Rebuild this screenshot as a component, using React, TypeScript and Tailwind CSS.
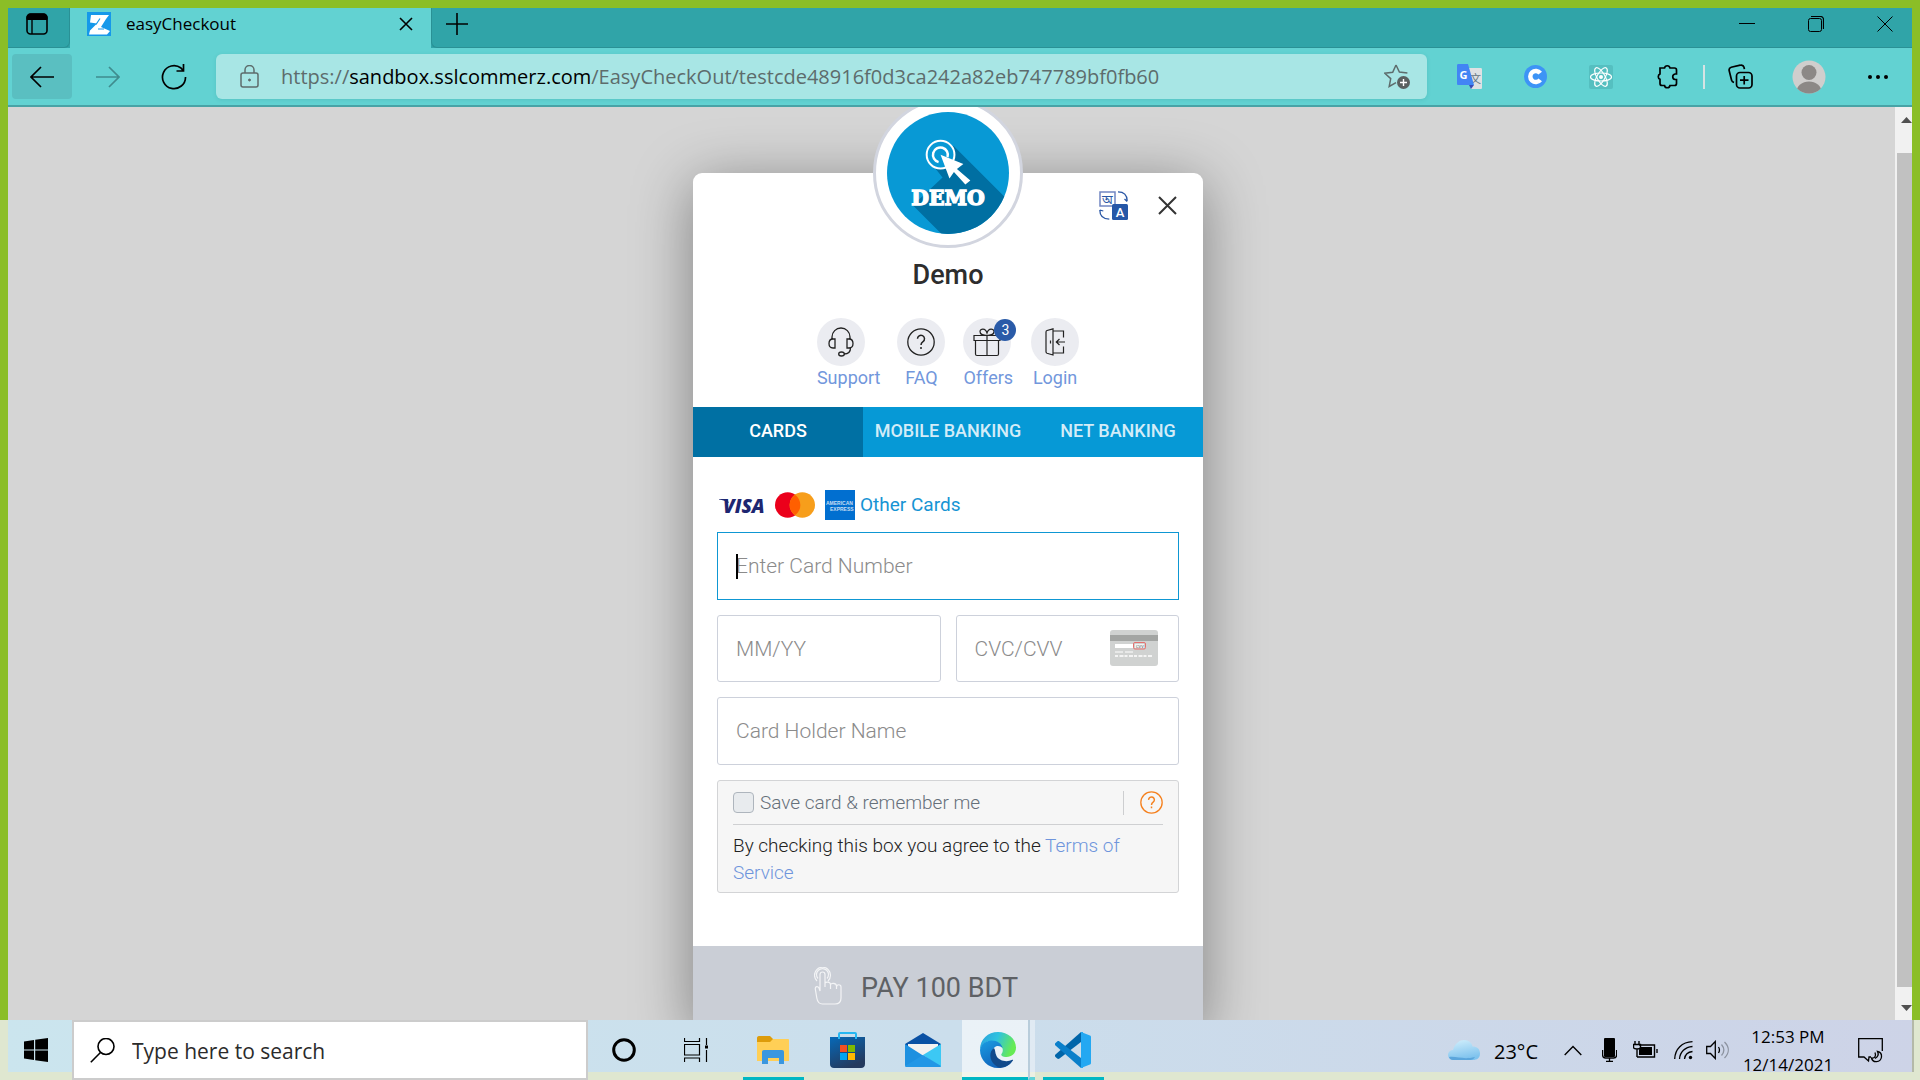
import type { ReactNode } from "react";

const ui = "font-['Open_Sans','Noto_Sans',sans-serif]";

function Svg({ w, h, box, children, className = "" }: { w: number; h: number; box?: string; children: ReactNode; className?: string }) {
  return (
    <svg width={w} height={h} viewBox={box ?? `0 0 ${w} ${h}`} fill="none" stroke="currentColor" className={`shrink-0 ${className}`} aria-hidden="true">
      {children}
    </svg>
  );
}

function TitleBar() {
  return (
    <div className="flex h-10 shrink-0 bg-[#30a4a8]">
      <button aria-label="Tab actions" className="flex w-[62px] items-start justify-center rounded-br-md border-r border-b border-[#2a9195] pt-[5px] pr-1">
        <Svg w={22} h={22}>
          <rect x="1" y="1" width="20" height="20" rx="3.5" strokeWidth="1.6" />
          <path d="M1 6.500V4.500C1 2.500 2.500 1 4.500 1h13C19.500 1 21 2.500 21 4.500v2z" fill="#000" />
          <path d="M6 6v15" strokeWidth="1.4" />
        </Svg>
      </button>
      <div className="flex w-[361px] items-start bg-[#62d2d2] pt-1 pl-[17px]">
        <Svg w={24} h={24}>
          <rect width="24" height="24" fill="#1598ea" stroke="none" />
          <path d="M4 3h18l-3 4-5 8 9 4-3 3.500H2l1-4 7-7-7-1z" fill="#fff" stroke="none" />
          <path d="M9 12.500l4-6M11 17h6" stroke="#1598ea" strokeWidth="1.200" />
        </Svg>
        <span className="ml-[15px] grow text-[17px] leading-6">easyCheckout</span>
        <button aria-label="Close tab" className="mt-[5px] mr-[18px]">
          <Svg w={14} h={14}><path d="M1 1l12 12M13 1L1 13" strokeWidth="1.600" /></Svg>
        </button>
      </div>
      <div className="flex grow items-start rounded-bl-md border-b border-l border-[#2a9195] pt-[5px] pl-[14px]">
        <button aria-label="New tab">
          <Svg w={22} h={22}><path d="M11 0v22M0 11h22" strokeWidth="1.600" /></Svg>
        </button>
      </div>
      <div className="flex items-start gap-[53px] border-b border-[#2a9195] pt-2 pr-[19px]">
        <button aria-label="Minimize"><Svg w={16} h={16}><path d="M0 7.500h16" /></Svg></button>
        <button aria-label="Restore">
          <Svg w={16} h={16}><rect x=".5" y="2.500" width="13" height="13" rx="2" /><path d="M3 .5h9.500a3 3 0 0 1 3 3V13" strokeWidth="1.200" /></Svg>
        </button>
        <button aria-label="Close"><Svg w={16} h={16}><path d="M.5.5l15 15M15.500.5l-15 15" /></Svg></button>
      </div>
    </div>
  );
}

function Toolbar() {
  return (
    <div className="flex h-[59px] shrink-0 items-center border-b-2 border-[#48a3a6] bg-[#62d2d2] pl-1">
      <button aria-label="Back" className="flex h-[45px] w-[60px] items-center justify-center rounded-sm bg-[#5abfc1]">
        <Svg w={24} h={22}><path d="M24 11H1M11 1L1 11l10 10" strokeWidth="1.700" /></Svg>
      </button>
      <button aria-label="Forward" className="ml-6 text-[#3f8c8e]">
        <Svg w={24} h={22}><path d="M0 11h23M13 1l10 10-10 10" strokeWidth="1.700" /></Svg>
      </button>
      <button aria-label="Refresh" className="ml-[41px]">
        <Svg w={26} h={26}><path d="M24.500 13A11.500 11.500 0 1 1 20 4l2 2.500M22.500 0v7h-7" strokeWidth="1.700" /></Svg>
      </button>
      <div className="mr-[30px] ml-[29px] flex h-[45px] grow items-center rounded-md bg-[#a8e6e5] pr-4 pl-6 text-[#5d6c6c] shadow-[0_1px_4px_rgba(0,90,90,0.12)]">
        <Svg w={19} h={24}>
          <rect x="1" y="8" width="17" height="14" rx="2" strokeWidth="1.500" />
          <path d="M5 8V5a4.500 4.500 0 0 1 9 0v3" strokeWidth="1.500" /><circle cx="9.500" cy="15" r="1" fill="currentColor" />
        </Svg>
        <div role="textbox" aria-label="Address" tabIndex={0} className="ml-[22px] grow text-[20px] leading-6 whitespace-nowrap">
          https://<span className="text-black">sandbox.sslcommerz.com</span>/EasyCheckOut/testcde48916f0d3ca242a82eb747789bf0fb60
        </div>
        <button aria-label="Add to favorites">
          <Svg w={27} h={26}>
            <path d="M12 1l3.400 7 8 .9M12 1L8.700 8.200.8 9.200l5.900 5.400L5.200 22.500 12 18.700" strokeWidth="1.500" />
            <circle cx="19.500" cy="18.500" r="6.500" fill="#5a6060" stroke="none" /><path d="M19.500 15v7M16 18.500h7" stroke="#fff" strokeWidth="1.400" />
          </Svg>
        </button>
      </div>
      <div className="flex items-center pr-6">
        <button aria-label="Translate">
          <Svg w={25} h={26}>
            <path d="M11 4h12.500c1 0 1.500.5 1.500 1.500v18c0 1-.5 1.500-1.500 1.500H14z" fill="#dfe1e3" stroke="none" />
            <text x="13" y="19" fontSize="11" fill="#66757f" stroke="none" fontFamily="Noto Sans CJK SC">文</text>
            <path d="M1.500 0H11l6 21H1.500C.5 21 0 20.500 0 19.500v-18C0 .5.500 0 1.500 0z" fill="#4285f4" stroke="none" />
            <path d="M12 21h5l-3 4z" fill="#3a4bb5" stroke="none" />
            <text x="2.500" y="14.500" fontSize="11" fontWeight="700" fill="#fff" stroke="none" fontFamily="Open Sans">G</text>
          </Svg>
        </button>
        <button aria-label="C extension" className="ml-[42px]">
          <Svg w={23} h={23}><circle cx="11.500" cy="11.500" r="11.500" fill="#3d94f6" stroke="none" /><path d="M16.200 8.200a5.500 5.500 0 1 0 0 6.600" stroke="#fff" strokeWidth="4.500" /></Svg>
        </button>
        <button aria-label="React tools" className="ml-[42px]">
          <Svg w={24} h={24}>
            <rect width="24" height="24" rx="2" fill="#55bfc0" stroke="none" />
            <g stroke="#fff" strokeWidth="1.200"><ellipse cx="12" cy="12" rx="10.500" ry="4" /><ellipse cx="12" cy="12" rx="10.500" ry="4" transform="rotate(60 12 12)" /><ellipse cx="12" cy="12" rx="10.500" ry="4" transform="rotate(120 12 12)" /></g>
            <circle cx="12" cy="12" r="2" fill="#fff" stroke="none" />
          </Svg>
        </button>
        <button aria-label="Extensions" className="ml-[43px]">
          <Svg w={22} h={25}><path d="M4 4h4.500a2.800 2.800 0 0 1 5.500 0h4.500a2 2 0 0 1 2 2v4H19a2.800 2.800 0 0 0 0 5.500h1.500v4a2 2 0 0 1-2 2H14a2.800 2.800 0 0 1-5.500 0H6a2 2 0 0 1-2-2v-4.200a2.900 2.900 0 0 1 0-5.300z" strokeWidth="1.700" /></Svg>
        </button>
        <div className="ml-[25px] h-6 w-[2px] bg-[#d5e3e3]" />
        <button aria-label="Collections" className="ml-[23px]">
          <Svg w={25} h={25}><rect x="8.500" y="8.500" width="15.500" height="15.500" rx="3.500" strokeWidth="1.700" /><path d="M16.200 12v8.500M12 16.200h8.500M6 18.500c-1.500-.5-2-1-2.400-2.300L1.200 6.700C.8 5 1.500 3.700 3.200 3.200l9-2c2-.5 3.300.2 3.800 2l.4 2" strokeWidth="1.700" /></Svg>
        </button>
        <button aria-label="Profile" className="ml-[39px]">
          <Svg w={34} h={34}>
            <clipPath id="avatar"><circle cx="17" cy="17" r="16.500" /></clipPath>
            <g clipPath="url(#avatar)" stroke="none"><rect width="34" height="34" fill="#d0cecd" /><circle cx="17" cy="12.500" r="7.500" fill="#8c8886" /><ellipse cx="17" cy="32" rx="12.500" ry="10.500" fill="#8c8886" /></g>
          </Svg>
        </button>
        <button aria-label="Settings and more" className="ml-[42px]">
          <Svg w={20} h={4}><g fill="#000" stroke="none"><circle cx="2" cy="2" r="2" /><circle cx="10" cy="2" r="2" /><circle cx="18" cy="2" r="2" /></g></Svg>
        </button>
      </div>
    </div>
  );
}

function DemoLogo() {
  return (
    <div className="absolute -top-[75px] left-1/2 flex size-[150px] -translate-x-1/2 items-center justify-center rounded-full border-[3px] border-[#d2d5df] bg-white">
      <Svg w={122} h={122} box="0 0 123 123">
        <clipPath id="disc"><circle cx="61.500" cy="61.500" r="61.500" /></clipPath>
        <g clipPath="url(#disc)" stroke="none">
          <rect width="123" height="123" fill="#0899d5" />
          <path d="M67 34L125 92V125H57L26 94L56 66L44 51z" fill="#006fa2" />
        </g>
        <circle cx="54" cy="43" r="14" fill="#0899d5" stroke="#fff" strokeWidth="2" />
        <path d="M52 50.500a7.500 7.500 0 1 1 9-5" stroke="#fff" strokeWidth="2.500" />
        <path d="M54 43l23 9.500-6.500 5L84 69l-5 4-11.500-12.500L63 67z" fill="#fff" stroke="none" />
        <text x="61.500" y="94" textAnchor="middle" fontSize="20.500" fontWeight="700" fill="#fff" stroke="#fff" strokeWidth="1.400" fontFamily="DejaVu Serif, serif">DEMO</text>
      </Svg>
    </div>
  );
}

const support = (
  <Svg w={26} h={30}>
    <path d="M4 12V10a9 9 0 0 1 18 0v2M7 12v9H5c-3 0-4-2-4-4.500S2 12 5 12zM19 12v9h2c3 0 4-2 4-4.500S24 12 21 12zM22.500 21c0 4-2 6-6.500 6" strokeWidth="1.300" />
    <ellipse cx="13.500" cy="27" rx="2.800" ry="2" strokeWidth="1.300" />
  </Svg>
);
const faq = (
  <Svg w={28} h={28}>
    <circle cx="14" cy="14" r="13.200" strokeWidth="1.300" />
    <path d="M10.500 10.800a3.500 3.500 0 1 1 5.500 2.800c-1.500 1-2 1.700-2 3.400M14 19v2" strokeWidth="1.500" />
  </Svg>
);
const gift = (
  <Svg w={28} h={30}>
    <path d="M1 8.500h26v5H1zM2.500 13.500V27c0 1 .5 1.500 1.500 1.500h20c1 0 1.500-.5 1.500-1.500V13.500M14 8.500v20M14 8.500C11 8.500 7 7.500 7 4.500S12.500.5 14 6c1.500-5.500 7-4.500 7-1.500s-4 4-7 4" strokeWidth="1.200" />
  </Svg>
);
const login = (
  <Svg w={20} h={28}>
    <path d="M2 2.500l6-1.700V27l-6-1.700c-.8-.3-1-.7-1-1.500V4C1 3.200 1.200 2.800 2 2.500zM8 3h10.500v6.500M18.500 18.500V25H8M5.500 12.500v3M20 14h-8.500M14.500 11l-3.200 3 3.200 3" strokeWidth="1.200" />
  </Svg>
);

const shortcuts = [
  { label: "Support", icon: support, pos: "items-start", gap: "" },
  { label: "FAQ", icon: faq, pos: "items-center", gap: "ml-[17px]" },
  { label: "Offers", icon: gift, pos: "items-start", gap: "ml-[18px]", badge: "3" },
  { label: "Login", icon: login, pos: "items-center", gap: "ml-[18px]" },
];

const field =
  "w-full min-w-0 rounded-[3px] border border-[#cdd1db] bg-white px-[18px] text-[21px] font-light text-[#222] outline-none placeholder:text-[#8b8b8b]";

function Checkout() {
  return (
    <section className="relative mx-auto mt-[66px] flex w-[510px] flex-col rounded-t-[9px] bg-white font-['Roboto',sans-serif] shadow-[0_10px_60px_rgba(0,0,0,0.4)]">
      <DemoLogo />
      <div className="flex h-[234px] flex-col items-center">
        <div className="flex w-full items-center justify-end gap-[30px] pt-[18px] pr-[26px]">
          <button aria-label="Change language">
            <Svg w={29} h={29}>
              <rect x="1" y="1" width="15" height="14" stroke="#7186c2" strokeWidth="1.500" />
              <text x="3" y="13" fontSize="12" fill="#2a57a5" stroke="none" fontFamily="Noto Sans Bengali, Noto Sans, sans-serif">অ</text>
              <rect x="13" y="13" width="16" height="16" rx="1.500" fill="#2557a7" stroke="none" />
              <text x="21" y="26" textAnchor="middle" fontSize="13" fontWeight="500" fill="#fff" stroke="none" fontFamily="Roboto">A</text>
              <path d="M19 .8c5 0 9 2 9.200 9M25.500 8l2.700 2.500M.8 19c0 6 3.500 9 9.500 9.200M.8 19l3.500 1" stroke="#2a57a5" strokeWidth="1.300" />
            </Svg>
          </button>
          <button aria-label="Close" className="text-[#333]">
            <Svg w={19} h={19}><path d="M1 1l17 17M18 1L1 18" strokeWidth="2" /></Svg>
          </button>
        </div>
        <h1 className="mt-[39px] text-[27px] leading-8 font-medium text-[#2d2d2d]">Demo</h1>
        <nav className="mt-[27px] flex">
          {shortcuts.map((s) => (
            <a key={s.label} href="#" className={`flex flex-col ${s.pos} ${s.gap}`}>
              <span className="relative flex size-12 items-center justify-center rounded-full bg-[#ebecf1] text-[#222]">
                {s.icon}
                {s.badge && <span className="absolute -right-[5px] top-px flex size-[22px] items-center justify-center rounded-full bg-[#2a5ba8] text-[14px] text-white">{s.badge}</span>}
              </span>
              <span className="text-[18px] leading-6 text-[#7297dc]">{s.label}</span>
            </a>
          ))}
        </nav>
      </div>
      <div className="flex h-[50px] bg-[#0699d6] text-[18px] font-medium text-white">
        <button className="flex-1 bg-[#0070a3] pb-[3px] whitespace-nowrap">CARDS</button>
        <button className="flex-1 pb-[3px] whitespace-nowrap text-[#d3ecf8]">MOBILE BANKING</button>
        <button className="flex-1 pb-[3px] whitespace-nowrap text-[#d3ecf8]">NET BANKING</button>
      </div>
      <form className="flex flex-col gap-[15px] px-6 pt-[33px] pb-[53px]">
        <div className="-mb-[3px] flex h-[30px] items-center">
          <Svg w={46} h={17} className="ml-[2px]">
            <text x="4" y="16" fontSize="19" fontWeight="800" fontStyle="italic" fill="#1d2671" stroke="none" fontFamily="Open Sans">VISA</text>
            <path d="M0 2h8l2 4C7 4 4 3 0 2.500z" fill="#1d2671" stroke="none" />
          </Svg>
          <Svg w={40} h={26} box="0 0 41 26" className="ml-[10px]">
            <g stroke="none"><circle cx="13" cy="13" r="13" fill="#eb001b" /><circle cx="28" cy="13" r="13" fill="#f79e1b" /><path d="M20.500 2.400a13 13 0 0 1 0 21.200a13 13 0 0 1 0-21.200z" fill="#ff5f00" /></g>
          </Svg>
          <Svg w={30} h={30} className="ml-[10px]">
            <rect width="30" height="30" fill="#016fd0" stroke="none" />
            <g fill="#c7def3" stroke="none" fontFamily="Liberation Sans" fontWeight="700" fontSize="5"><text x="1" y="15">AMERICAN</text><text x="5" y="21">EXPRESS</text></g>
          </Svg>
          <a href="#" className="ml-[5px] text-[19px] leading-6 text-[#1694d4]">Other Cards</a>
        </div>
        <div className="relative">
          <input aria-label="Card number" placeholder="Enter Card Number" className={`${field} h-[68px] rounded-none! border-[#0e97d3]!`} />
          <span className="absolute top-[22px] left-[19px] h-[25px] w-[2px] bg-black" />
        </div>
        <div className="grid grid-cols-2 gap-[15px]">
          <input aria-label="Expiry date" placeholder="MM/YY" className={`${field} h-[67px]`} />
          <div className="relative">
            <input aria-label="Security code" placeholder="CVC/CVV" className={`${field} h-[67px]`} />
            <Svg w={48} h={36} className="absolute top-[15px] right-[21px]">
              <g stroke="none"><rect width="48" height="36" rx="3" fill="#d0d2d1" /><path d="M0 5h48v6H0z" fill="#a3a5a3" /><path d="M5 14h18v4H5z" fill="#fff" /><rect x="25" y="14" width="9" height="4" fill="#f3f3f3" /><text x="26" y="17.500" fontSize="4" fill="#555">CVV</text></g>
              <rect x="23.500" y="12.500" width="12" height="6.500" rx="1.500" stroke="#e5716f" />
              <path d="M5 22h8M15 22h8" stroke="#fff" /><path d="M5 26h38" stroke="#fff" strokeWidth="1.300" strokeDasharray="3 1.500 4 1" />
            </Svg>
          </div>
        </div>
        <input aria-label="Card holder name" placeholder="Card Holder Name" className={`${field} h-[68px]`} />
        <div className="rounded-[3px] border border-[#d3d4d6] bg-[#f6f6f6] px-[15px] pb-px font-light">
          <div className="flex h-11 items-center border-b border-[#cfd0d2] text-[#66707a]">
            <input id="save" type="checkbox" className="size-[21px] appearance-none rounded border border-[#aeb5bd] bg-[#e8ebee]" />
            <label htmlFor="save" className="ml-[6px] grow text-[19px] leading-6">Save card &amp; remember me</label>
            <span className="mr-4 h-6 w-px bg-[#cdced0]" />
            <button type="button" aria-label="Help" className="text-[#f5811f]">
              <Svg w={23} h={23} box="0 0 28 28">
                <circle cx="14" cy="14" r="13" strokeWidth="1.600" />
                <path d="M10.500 10.800a3.500 3.500 0 1 1 5.500 2.800c-1.500 1-2 1.700-2 3.400M14 19v2" strokeWidth="1.800" />
              </Svg>
            </button>
          </div>
          <p className="pt-[7px] pb-[5px] text-[19px] leading-[27px] text-[#222]">
            By checking this box you agree to the <a href="#" className="text-[#6f95dc]">Terms of Service</a>
          </p>
        </div>
      </form>
      <button className="flex h-[84px] items-center bg-[#caced6] pl-[121px] text-[27px] text-[#5e6165]">
        <Svg w={28} h={38} className="mb-1 text-[#f3f4f6]">
          <path d="M6 20V7.500a2.500 2.500 0 0 1 5 0V20M6 13v11l-1-3c-1-2-4-2-3.700 1l1.500 9C3.500 35 5 37 8.500 37H21c4 0 6-2 6-6V20c0-3-4.500-3-4.500 0v2M11 16.500c0-2 5.500-2 5.500 1V22M16.500 18c0-2.500 6-2 6 1v3M4 11.500a6 6 0 1 1 9 0M3 14A8 8 0 1 1 14 14" strokeWidth="1.200" />
        </Svg>
        <span className="ml-[19px]">PAY 100 BDT</span>
      </button>
    </section>
  );
}

function Taskbar() {
  return (
    <footer className="relative z-10 flex h-[60px] shrink-0 bg-linear-to-r from-[#cbe5ee] via-[#cbdeec] to-[#cdd3e7] px-2">
      <span className="absolute inset-y-0 left-0 w-2 bg-[#dfe7d0]" />
      <span className="absolute inset-y-0 right-0 w-2 border-l-2 border-[#b4b9a8] bg-[#dfe7d0]" />
      <span className="absolute inset-x-0 bottom-0 h-2 bg-[#dfe7d0]" />
      <button aria-label="Start" className="relative w-16 pl-4">
        <Svg w={24} h={24}><path d="M0 3.500l10-1.500v9.500H0zM11.200 1.800L24 0v11.500H11.200zM0 12.600h10V22L0 20.500zM11.200 12.600H24V24l-12.800-1.800z" fill="#000" stroke="none" /></Svg>
      </button>
      <div className="relative flex w-[516px] items-center border-2 border-[#ccc] bg-white pl-4">
        <Svg w={25} h={25}><circle cx="16" cy="8.500" r="8" strokeWidth="1.600" /><path d="M10.500 14.500L.8 24.200" strokeWidth="1.600" /></Svg>
        <input aria-label="Search" placeholder="Type here to search" className="ml-[17px] min-w-0 grow pt-1 text-[21px] outline-none placeholder:text-[#2b2b2b]" />
      </div>
      <div className="relative flex items-center">
        <button aria-label="Cortana" className="ml-6"><Svg w={24} h={24}><circle cx="12" cy="12" r="10.300" strokeWidth="3" /></Svg></button>
        <button aria-label="Task view" className="ml-12">
          <Svg w={25} h={24}><path d="M.5 0v3.500h15V0M.5 6.500h15v10.500H.500zM.5 24v-4h15v4M22.500 0v7M22.500 12v12" strokeWidth="1.200" /><rect x="21" y="7.500" width="3" height="3" fill="#000" stroke="none" /></Svg>
        </button>
        <button aria-label="File Explorer" className="ml-[34px] flex h-full w-[61px] items-center justify-center border-b-[3px] border-[#00b7c3] pt-[3px] pr-[2px]">
          <Svg w={32} h={28}><g stroke="none"><path d="M0 2c0-1 .5-2 2-2h11l3 3v5H0z" fill="#dd9c0b" /><path d="M0 6h13l3-3h15c.7 0 1 .5 1 1v21H0z" fill="#ffcf56" /><path d="M5 28V16c0-1.200.8-2 2-2h18c1.200 0 2 .8 2 2v12h-5v-6H11v6z" fill="#3a97df" /></g></Svg>
        </button>
        <button aria-label="Microsoft Store" className="ml-[26px]">
          <Svg w={35} h={36}><defs><linearGradient id="store" x1="0" y1="0" x2="0.5" y2="1"><stop stopColor="#0669b8" /><stop offset="1" stopColor="#243a5e" /></linearGradient></defs>
            <path d="M0 5h35v27c0 2.500-1.500 4-4 4H4c-2.500 0-4-1.500-4-4z" fill="url(#store)" stroke="none" /><path d="M9 7V2c0-.7.3-1 1-1h15c.7 0 1 .3 1 1v5" stroke="#26b7f2" strokeWidth="2" />
            <g stroke="none"><path d="M10 13h7v7h-7z" fill="#f25022" /><path d="M18 13h7v7h-7z" fill="#7fba00" /><path d="M10 21h7v7h-7z" fill="#00a4ef" /><path d="M18 21h7v7h-7z" fill="#ffb900" /></g></Svg>
        </button>
        <button aria-label="Mail" className="ml-10">
          <Svg w={36} h={34}><g stroke="none"><path d="M0 11L18 0l18 11v6H0z" fill="#0a51a4" /><path d="M3 11h30v10L18 28 3 20z" fill="#f3f2f1" /><path d="M0 11l36 23H2c-1.300 0-2-.7-2-2z" fill="#1d90e0" /><path d="M36 11L18 22l17.500 12c.3-.3.500-.800.500-2z" fill="#3cc8f4" /><path d="M0 33l18-11 18 11-1 1H1z" fill="#2297e6" /></g></Svg>
        </button>
        <button aria-label="Microsoft Edge" className="ml-[21px] flex h-full w-[66px] items-center justify-center border-b-[3px] border-[#00b7c3] bg-white/60 pt-[3px] pl-[6px]">
          <Svg w={36} h={36}><defs><linearGradient id="eg" x1="0" y1="0" x2="1" y2="0.3"><stop stopColor="#2a9fdc" /><stop offset=".5" stopColor="#2fc2df" /><stop offset="1" stopColor="#66eb54" /></linearGradient><linearGradient id="eb" x1="0" y1="0" x2="0.6" y2="1"><stop stopColor="#1b9de2" /><stop offset="1" stopColor="#0f5fb8" /></linearGradient></defs>
            <g stroke="none"><path d="M0 18C0 7 8 0 18 0s18 7 18 15.500c0 6-4.500 9.500-9.500 9.500-4 0-6-1.500-5-3 1.500-2 1.500-4 1-5.500C21 12 17 9 11.500 9 6 9 2 12 0 18z" fill="url(#eg)" /><path d="M0 18C1 12 6 8.500 11.500 8.500c6 0 10.500 3.500 11 7.500-2-2-6-3-8.500 0-3.500 4-2 11 4 15 5 3 10 1.500 14-1.500C29 34 24 36 18 36 8 36 0 28 0 18z" fill="url(#eb)" /><path d="M14 16c-5 3-5 12 1 17 2 2 5 3 7 2.500 4-.5 8-3 11-7 .3-.5 0-1-.7-.7C27 30.500 19 29 16.500 24c-1.700-3.500-1-6.500-2.500-8z" fill="#114a8b" /></g></Svg>
        </button>
        <span className="h-full w-[7px] border-b-[3px] border-l-2 border-b-[#5fd3d8] border-l-[#b9cddb] bg-white/40" />
        <button aria-label="Visual Studio Code" className="ml-2 flex h-full w-[61px] items-center justify-center border-b-[3px] border-[#00b7c3] pt-[3px] pr-[2px]">
          <Svg w={36} h={36}><g stroke="none"><path d="M26 0v10L4.500 26.500c-.8.600-1.600.6-2.300 0L.5 24.900c-.8-.8-.8-1.700 0-2.500z" fill="#0065a9" /><path d="M.5 13.600c-.8-.8-.8-1.700 0-2.500L2.200 9.500c.7-.6 1.500-.6 2.300 0L26 26v10z" fill="#0a7fca" /><path d="M26 0l9 3.500c.7.300 1 .8 1 1.500v26c0 .7-.3 1.200-1 1.500L26 36c1 0 1-.5 1-2V2c0-1.500 0-2-1-2z" fill="#24a8f2" /><path d="M26 0h2v36h-2z" fill="#24a8f2" /></g></Svg>
        </button>
      </div>
      <div className="relative ml-auto flex items-center pr-[29px]">
        <Svg w={32} h={20}><defs><linearGradient id="cl" x1="0" y1="0" x2="0.300" y2="1"><stop stopColor="#d4f0fc" /><stop offset="1" stopColor="#7fc3ee" /></linearGradient></defs>
          <g stroke="none"><path d="M5 20a5 5 0 0 1 0-10C7 3 12 0 16 0c5 0 8 3 8.500 6.500C29 6.500 32 9 32 13.500S29 20 25 20z" fill="url(#cl)" /><path d="M1 17c8-1 14 3 26 0-1 2-3 3-5 3H5c-2 0-3.500-1-4-3z" fill="#5ba6dc" /></g></Svg>
        <span className="ml-[14px] pt-1 text-[20px]">23°C</span>
        <button aria-label="Show hidden icons" className="ml-[26px]"><Svg w={18} h={11}><path d="M.7 10L9 1.500 17.300 10" strokeWidth="1.400" /></Svg></button>
        <Svg w={15} h={24} className="ml-5"><rect x="2" width="11" height="19" rx="1" fill="#000" stroke="none" /><path d="M.6 12v5c0 2 1 3 3 3h8c2 0 3-1 3-3v-5M7.500 20v3M4 23.300h7" strokeWidth="1.300" /></Svg>
        <Svg w={25} h={18} className="ml-4"><path d="M6 4h15.500v12H4M24 8v4M2 0v3M6 0v3M.5 3.500h7v3c0 2-7 2-7 0zM4 8v8" strokeWidth="1.400" /><path d="M7 6h12v8H6V9z" fill="#000" stroke="none" /></Svg>
        <Svg w={19} h={19} className="ml-4"><path d="M.7 18C1 8 8 1 18.500.7M5.500 18C6 11 11 6 18.500 5.500M10.500 18c.5-4 3-7 8-7.500" strokeWidth="1.300" /><circle cx="16.500" cy="16.500" r="1.700" fill="#000" stroke="none" /></Svg>
        <Svg w={24} h={20} className="ml-[13px]"><path d="M.7 6.500h3.800L9.300 1.500v17l-4.800-5H.7zM12.500 7c1.300 2 1.300 4 0 6" strokeWidth="1.300" /><path d="M15.500 4.500c3 3.500 3 7.500 0 11M18.500 2c5 5 5 11 0 16" stroke="#8c93a0" strokeWidth="1.300" /></Svg>
        <div className="ml-3 flex w-[92px] flex-col items-center pt-px text-[17px] leading-7"><span>12:53 PM</span><span>12/14/2021</span></div>
        <button aria-label="Notifications" className="ml-6"><Svg w={25} h={25}><path d="M13 19h-2l-.5 4-4.500-4H.700V.700h23.600V13M17 14.500c1.500 4-.500 6-3.500 5.500 1 5 9 5 10-1 .3-3-1.500-5-4-5.500 1.500 3 .500 5.500-2.500 7" strokeWidth="1.300" /></Svg></button>
      </div>
    </footer>
  );
}

export default function App() {
  return (
    <div className={`flex h-screen w-full flex-col overflow-hidden bg-[#8bbe27] text-black ${ui}`}>
      <div className="flex min-h-0 grow flex-col px-2 pt-2">
        <TitleBar />
        <Toolbar />
        <div className="flex min-h-0 grow">
          <main className="grow overflow-hidden bg-[#d5d5d5] pr-[7px]">
            <Checkout />
          </main>
          <div className="flex w-[17px] flex-col items-end bg-[#f1f1f1]">
            <Svg w={12} h={46}><path d="M1 16l5.500-6 5.500 6z" fill="#505050" stroke="none" /></Svg>
            <div className="w-[15px] grow bg-[#c1c1c1]" />
            <Svg w={12} h={33}><path d="M1 18h11l-5.500 6z" fill="#505050" stroke="none" /></Svg>
          </div>
        </div>
      </div>
      <Taskbar />
    </div>
  );
}
